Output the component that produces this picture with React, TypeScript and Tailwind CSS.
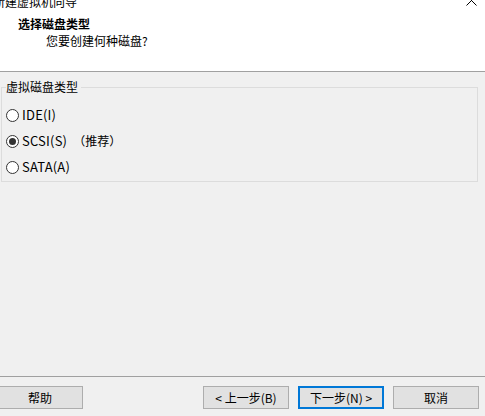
import React from "react";

const font = { fontFamily: '"Noto Sans CJK SC", "Microsoft YaHei", sans-serif' };

function Radio({ checked, label, extra }: { checked?: boolean; label: string; extra?: string }) {
  return (
    <div className="flex h-[26px] items-center">
      <span className="flex h-[13px] w-[13px] items-center justify-center rounded-full border border-[#333333] bg-white">
        {checked && <span className="h-[7px] w-[7px] rounded-full bg-[#333333]" />}
      </span>
      <span className="ml-[3px] text-[13px] leading-[16px] tracking-[0.2px] text-black">{label}</span>
      {extra && <span className="ml-[6px] text-[12px] leading-[16px] text-black">{extra}</span>}
    </div>
  );
}

function Btn({ children, primary, className = "" }: { children: React.ReactNode; primary?: boolean; className?: string }) {
  return (
    <div
      className={
        "flex h-[23px] w-[86px] items-center justify-center bg-[#e1e1e1] text-[12px] leading-[16px] text-black " +
        (primary ? "border-2 border-[#0078d7] " : "border border-[#adadad] ") +
        className
      }
    >
      {children}
    </div>
  );
}

export default function App() {
  return (
    <div className="relative h-[416px] w-[485px] overflow-hidden bg-[#f0f0f0]" style={font}>
      <div className="flex h-[72px] flex-col border-b border-[#a0a0a0] bg-white">
        <div className="mt-[-6px] flex h-[16px] items-start justify-between">
          <span className="ml-[-7px] text-[12px] leading-[16px] text-black">新建虚拟机向导</span>
          <svg width="11" height="11" viewBox="0 0 11 11" className="mr-[8px] mt-[1px]">
            <path d="M0.5 0.5 L10.5 10.5 M10.5 0.5 L0.5 10.5" stroke="#000" strokeWidth="1" />
          </svg>
        </div>
        <div className="mt-[6px] pl-[18px] text-[12px] font-bold leading-[16px] text-black">选择磁盘类型</div>
        <div className="mt-[1px] pl-[46px] text-[12px] leading-[16px] text-black">您要创建何种磁盘?</div>
      </div>

      <div className="h-[304px] pt-[7px]">
        <fieldset className="ml-[1px] mr-[7px] border border-[#dcdcdc] pb-[1px] pl-[4px] pt-[7px]">
          <legend className="pr-[3px] text-[12px] leading-[16px] text-black">虚拟磁盘类型</legend>
          <Radio label="IDE(I)" />
          <Radio label="SCSI(S)" extra="（推荐）" checked />
          <Radio label="SATA(A)" />
        </fieldset>
      </div>

      <div className="border-t border-[#a0a0a0]">
        <div className="mt-[9px] flex items-center">
          <Btn className="ml-[-3px]">帮助</Btn>
          <Btn className="ml-[120px]">&lt; 上一步(B)</Btn>
          <Btn primary className="ml-[9px]">下一步(N) &gt;</Btn>
          <Btn className="ml-[9px]">取消</Btn>
        </div>
      </div>
    </div>
  );
}
